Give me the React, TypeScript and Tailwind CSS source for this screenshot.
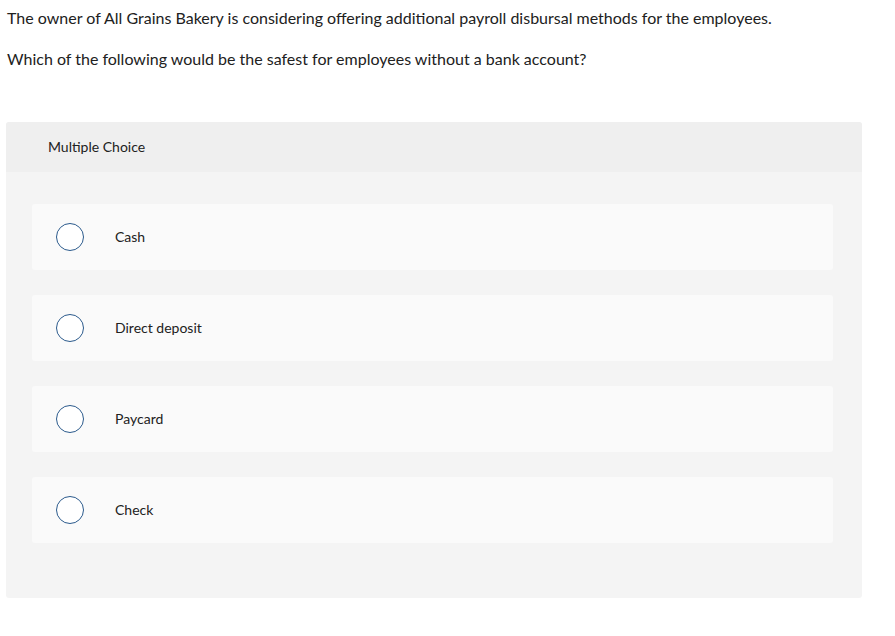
import React from "react";

const options = ["Cash", "Direct deposit", "Paycard", "Check"];

export default function App() {
  return (
    <div className="w-[895px] h-[636px] bg-white text-[#212121]" style={{ fontFamily: "Lato, 'Noto Sans', sans-serif" }}>
      <div className="pl-[7px] pt-[8px]">
        <p className="text-[16px] leading-[20px]">The owner of All Grains Bakery is considering offering additional payroll disbursal methods for the employees.</p>
        <p className="text-[16px] leading-[20px] mt-[21px]">Which of the following would be the safest for employees without a bank account?</p>
      </div>
      <div className="ml-[6px] mt-[53px] w-[856px] h-[476px] rounded-[3px] bg-[#f4f4f4] overflow-hidden">
        <div className="h-[50px] bg-[#efefef] flex items-center pl-[42px] pb-[2px] text-[14px]">Multiple Choice</div>
        <div className="pt-[32px] pl-[26px] pr-[29px] flex flex-col gap-[25px]">
          {options.map((o) => (
            <div key={o} className="h-[66px] bg-[#fafafa] rounded-[3px] flex items-center">
              <div className="ml-[24px] w-[28px] h-[28px] rounded-full border-[1.5px] border-[#2b5a8c] bg-white" />
              <span className="ml-[31px] pb-[2px] text-[14px]">{o}</span>
            </div>
          ))}
        </div>
      </div>
    </div>
  );
}
